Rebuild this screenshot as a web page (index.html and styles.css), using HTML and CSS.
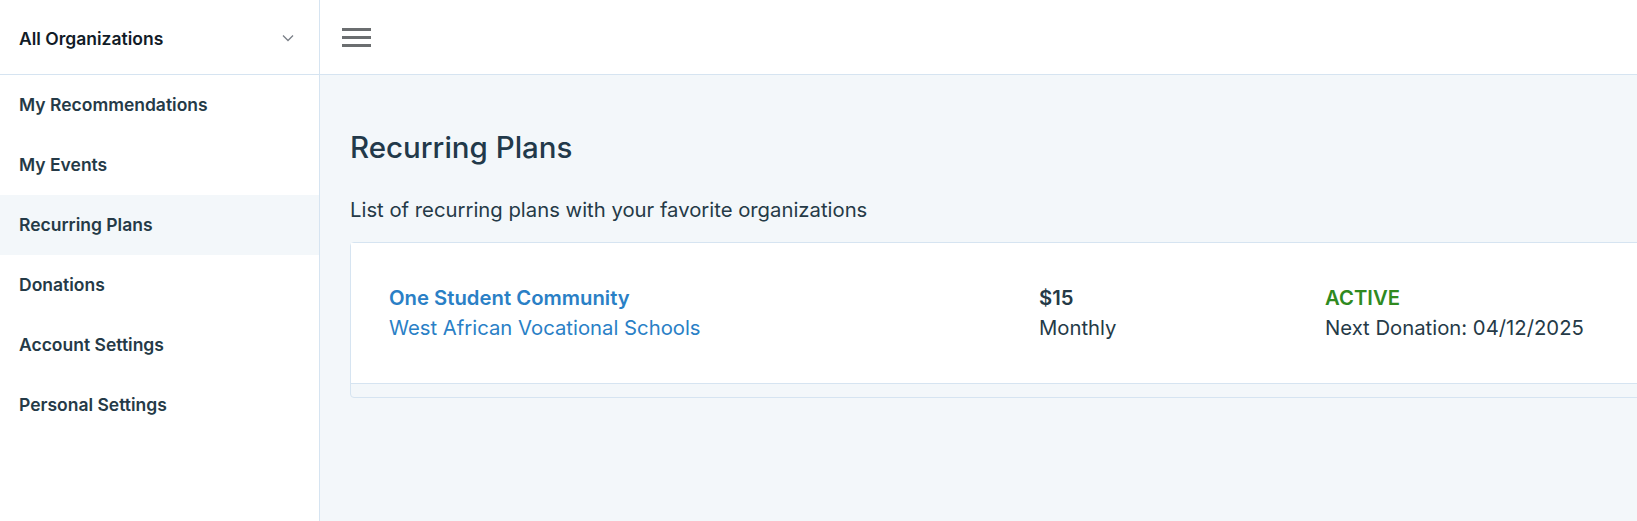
FILE: index.html
```html
<!DOCTYPE html>
<html lang="en">
<head>
    <meta charset="UTF-8">
    <meta name="viewport" content="width=device-width, initial-scale=1.0">
    <title>Recurring Plans</title>
    <link rel="stylesheet" href="styles.css">
</head>
<body>
    <aside class="sidebar">
        <div class="org-select">
            <span>All Organizations</span>
            <svg class="chevron" width="12" height="8" viewBox="0 0 12 8"><path d="M1 1.5 L6 6.5 L11 1.5" fill="none" stroke="#7a7f87" stroke-width="1.3"/></svg>
        </div>
        <nav class="side-nav">
            <a href="#">My Recommendations</a>
            <a href="#">My Events</a>
            <a href="#" class="active">Recurring Plans</a>
            <a href="#">Donations</a>
            <a href="#">Account Settings</a>
            <a href="#">Personal Settings</a>
        </nav>
    </aside>

    <div class="main">
        <header class="topbar">
            <button class="menu-btn" aria-label="Menu">
                <span></span><span></span><span></span>
            </button>
        </header>

        <section class="content">
            <h1>Recurring Plans</h1>
            <p class="subtitle">List of recurring plans with your favorite organizations</p>

            <div class="plan-card">
                <div class="plan-body">
                    <div class="plan-col plan-org">
                        <a href="#" class="org-name">One Student Community</a>
                        <a href="#" class="project-name">West African Vocational Schools</a>
                    </div>
                    <div class="plan-col plan-amount">
                        <strong>$15</strong>
                        <span>Monthly</span>
                    </div>
                    <div class="plan-col plan-status">
                        <strong class="status-active">ACTIVE</strong>
                        <span>Next Donation: 04/12/2025</span>
                    </div>
                </div>
                <div class="plan-footer"></div>
            </div>
        </section>
    </div>
</body>
</html>
```

FILE: styles.css
```css
html, body {
    height: 100%;
}

body {
    margin: 0;
    display: flex;
    font-family: Inter, "Noto Sans", Arial, sans-serif;
    color: #253a47;
    background: #f3f7fa;
    overflow: hidden;
}

.sidebar {
    width: 319px;
    flex-shrink: 0;
    background: #fff;
    border-right: 1px solid #d6e4f1;
}

.org-select {
    height: 75px;
    box-sizing: border-box;
    border-bottom: 1px solid #d6e4f1;
    display: flex;
    align-items: center;
    justify-content: space-between;
    padding: 2px 25px 0 19px;
    font-size: 17.5px;
    font-weight: 600;
    color: #111b27;
}

.side-nav a {
    display: flex;
    align-items: center;
    height: 60px;
    box-sizing: border-box;
    padding: 0 0 2px 19px;
    font-size: 17.5px;
    font-weight: 600;
    color: #253a47;
    text-decoration: none;
}

.side-nav a.active {
    background: #f3f7fa;
}

.main {
    flex: 1;
    min-width: 0;
    display: flex;
    flex-direction: column;
}

.topbar {
    height: 75px;
    box-sizing: border-box;
    background: #fff;
    border-bottom: 1px solid #d6e4f1;
    display: flex;
    align-items: center;
    padding-left: 22px;
}

.menu-btn {
    border: none;
    background: none;
    padding: 0;
    width: 29px;
    display: flex;
    flex-direction: column;
    gap: 5px;
    cursor: pointer;
}

.menu-btn span {
    display: block;
    height: 3px;
    background: #6b6e70;
}

.content {
    padding: 54px 0 0 30px;
}

.content h1 {
    margin: 0;
    font-size: 29.5px;
    line-height: 36px;
    font-weight: 500;
    color: #22394a;
}

.subtitle {
    margin: 31px 0 18px;
    font-size: 20.3px;
    line-height: 28px;
    color: #253a47;
}

.plan-card {
    width: 1400px;
    background: #f3f7fa;
    border: 1px solid #d6e4f1;
    border-radius: 4px;
}

.plan-body {
    background: #fff;
    border-bottom: 1px solid #d6e4f1;
    display: grid;
    grid-template-columns: 650px 286px 1fr;
    padding: 40px 38px;
}

.plan-col {
    display: flex;
    flex-direction: column;
    font-size: 20.3px;
    line-height: 30px;
}

.plan-col strong {
    font-weight: 600;
}

.plan-org a {
    color: #2a80c6;
    text-decoration: none;
}

.org-name {
    font-weight: 600;
}

.plan-amount, .plan-status {
    color: #253a47;
}

.status-active {
    color: #2f8a1f;
}

.plan-footer {
    height: 13px;
}
```
